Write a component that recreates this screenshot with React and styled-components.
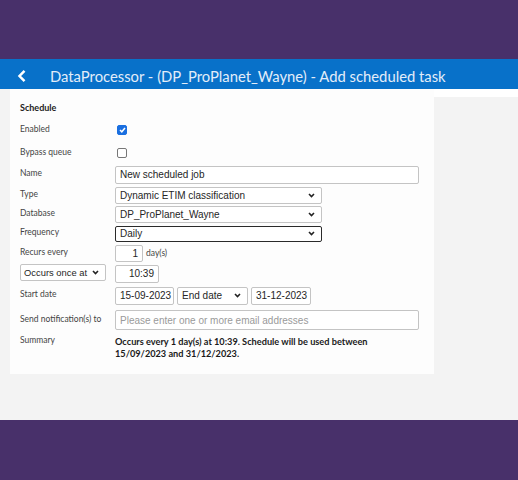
import React from 'react';
import styled, { createGlobalStyle } from 'styled-components';

const GlobalStyle = createGlobalStyle`
  html, body {
    margin: 0;
    padding: 0;
    background: #48306a;
  }
  * {
    box-sizing: border-box;
  }
`;

const Page = styled.div`
  width: 518px;
  height: 480px;
  display: flex;
  flex-direction: column;
  background: #48306a;
`;

const TopBand = styled.div`
  height: 59px;
  flex-shrink: 0;
`;

const TitleBar = styled.div`
  height: 30px;
  flex-shrink: 0;
  background: #0871c9;
  display: flex;
  align-items: center;
  padding: 4px 0 0 17px;
  color: #e3edf9;
  font-family: Lato, "Open Sans", sans-serif;
  font-size: 14.8px;
  svg {
    margin-right: 23px;
  }
`;

const Content = styled.div`
  height: 331px;
  flex-shrink: 0;
  background: #f3f3f3;
  display: flex;
  padding-left: 10px;
`;

const Side = styled.div`
  flex: 1;
  height: 8px;
  background: #ffffff;
`;

const Card = styled.div`
  width: 424px;
  height: 285px;
  background: #fdfdfd;
  padding: 12px 0 0 10px;
  font-family: Lato, "Open Sans", sans-serif;
  color: #333;
`;

const Heading = styled.div`
  height: 14px;
  font-size: 9px;
  font-weight: 700;
  line-height: 14px;
  color: #222;
`;

const Row = styled.div`
  display: flex;
  align-items: center;
  height: ${p => p.$h}px;
  margin-top: ${p => p.$mt}px;
`;

const Label = styled.div`
  width: 95px;
  flex-shrink: 0;
  font-size: 8.5px;
  color: #444;
  align-self: ${p => (p.$top ? 'flex-start' : 'center')};
  padding-bottom: ${p => (p.$top ? 0 : 3)}px;
`;

const Controls = styled.div`
  display: flex;
  align-items: center;
  gap: 3px;
`;

const Check = styled.span`
  width: 10px;
  height: 10px;
  margin-left: 2px;
  border-radius: 2px;
  display: flex;
  align-items: center;
  justify-content: center;
  background: ${p => (p.$on ? '#1a6fe0' : '#fff')};
  border: 1px solid ${p => (p.$on ? '#1a6fe0' : '#777')};
`;

const Field = styled.div`
  width: ${p => p.$w}px;
  height: ${p => p.$h || 18}px;
  border: 1px solid ${p => (p.$focus ? '#2a2a2a' : '#c4c4c4')};
  border-radius: 2px;
  background: #fff;
  display: flex;
  align-items: center;
  justify-content: ${p => (p.$right ? 'flex-end' : 'space-between')};
  padding: 0 ${p => (p.$right ? 4 : 6)}px 0 ${p => p.$pl || 4}px;
  font-family: "Liberation Sans", Arial, sans-serif;
  font-size: ${p => p.$fs || 10}px;
  color: ${p => (p.$muted ? '#9a9a9a' : '#262626')};
  white-space: nowrap;
`;

const Unit = styled.span`
  font-size: 8.5px;
  color: #444;
`;

const Summary = styled.div`
  font-size: 9.2px;
  font-weight: 700;
  line-height: 12px;
  color: #1a1a1a;
  width: 290px;
`;

const Chevron = () => (
  <svg width="7" height="5" viewBox="0 0 7 5">
    <path d="M1 1l2.5 2.5L6 1" fill="none" stroke="#222" strokeWidth="1.6" />
  </svg>
);

const Select = ({ w, h, focus, fs, pl, children }) => (
  <Field $w={w} $h={h} $focus={focus} $fs={fs} $pl={pl}>
    <span>{children}</span>
    <Chevron />
  </Field>
);

export default function App() {
  return (
    <Page>
      <GlobalStyle />
      <TopBand />
      <TitleBar>
        <svg width="10" height="14" viewBox="0 0 10 14">
          <path d="M7.5 1.8L2.5 7l5 5.2" fill="none" stroke="#fff" strokeWidth="2.5" />
        </svg>
        DataProcessor - (DP_ProPlanet_Wayne) - Add scheduled task
      </TitleBar>
      <Content>
        <Card>
          <Heading>Schedule</Heading>
          <Row $h={20} $mt={5}>
            <Label>Enabled</Label>
            <Check $on>
              <svg width="7" height="6" viewBox="0 0 7 6">
                <path d="M1 3l1.8 1.8L6 1" fill="none" stroke="#fff" strokeWidth="1.5" />
              </svg>
            </Check>
          </Row>
          <Row $h={20} $mt={3}>
            <Label>Bypass queue</Label>
            <Check />
          </Row>
          <Row $h={19} $mt={2}>
            <Label>Name</Label>
            <Field $w={304} $h={18}>New scheduled job</Field>
          </Row>
          <Row $h={18} $mt={2}>
            <Label>Type</Label>
            <Select w={207} h={17}>Dynamic ETIM classification</Select>
          </Row>
          <Row $h={18} $mt={1}>
            <Label>Database</Label>
            <Select w={207} h={17}>DP_ProPlanet_Wayne</Select>
          </Row>
          <Row $h={17} $mt={2}>
            <Label>Frequency</Label>
            <Select w={207} h={16} focus>Daily</Select>
          </Row>
          <Row $h={18} $mt={2}>
            <Label>Recurs every</Label>
            <Controls>
              <Field $w={28} $h={17} $right>1</Field>
              <Unit>day(s)</Unit>
            </Controls>
          </Row>
          <Row $h={19} $mt={2}>
            <Label>
              <Select w={86} h={17} fs={9.4} pl={3}>Occurs once at</Select>
            </Label>
            <Field $w={44} $h={18} $right>10:39</Field>
          </Row>
          <Row $h={19} $mt={3}>
            <Label>Start date</Label>
            <Controls>
              <Field $w={59} $h={18}>15-09-2023</Field>
              <Select w={71} h={18}>End date</Select>
              <Field $w={60} $h={18}>31-12-2023</Field>
            </Controls>
          </Row>
          <Row $h={22} $mt={4}>
            <Label>Send notification(s) to</Label>
            <Field $w={304} $h={20} $muted>Please enter one or more email addresses</Field>
          </Row>
          <Row $h={26} $mt={4}>
            <Label $top>Summary</Label>
            <Summary>
              Occurs every 1 day(s) at 10:39. Schedule will be used between 15/09/2023 and 31/12/2023.
            </Summary>
          </Row>
        </Card>
        <Side />
      </Content>
    </Page>
  );
}
